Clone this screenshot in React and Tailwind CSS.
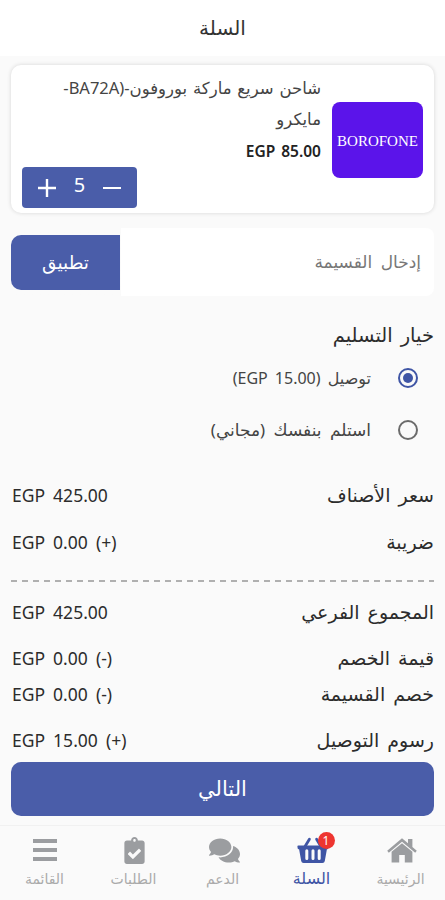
import React, { useState } from 'react';
import { FaComments, FaClipboardCheck } from 'react-icons/fa';

const ITEM_PRICE = 85;
const DELIVERY_FEE = 15;

const egp = (value) => `EGP ${value.toFixed(2)}`;

const HomeIcon = () => (
    <svg viewBox="0 0 30 25" className="mr-[-3px] h-[25px] w-[30px]" fill="currentColor">
        <path d="M15 0.2 L21 5.2 V1 h4.4 v8 L29.8 12.8 28.2 14.8 15 3.8 1.8 14.8 0.2 12.8z" />
        <path d="M15 5.2 L25.4 13.8 V24.6 H17.8 V17 H12.2 V24.6 H4.6 V13.8z" />
    </svg>
);

const BasketIcon = () => (
    <svg viewBox="0 0 32 28" className="mr-[-2px] h-7 w-8" fill="none" stroke="currentColor">
        <path d="M8 10.5 L12.4 3.2 M24 10.5 L19.6 3.2" strokeWidth="2.8" strokeLinecap="round" />
        <path
            d="M1.4 9.5 H30.6 a1 1 0 0 1 1 1.1 l-0.3 1.8 a1 1 0 0 1 -1 0.8 h-0.4 L27.8 25 a2.4 2.4 0 0 1 -2.4 2 H6.6 a2.4 2.4 0 0 1 -2.4 -2 L2.1 13.2 H1.7 a1 1 0 0 1 -1 -0.8 L0.4 10.6 a1 1 0 0 1 1 -1.1z"
            fill="currentColor"
            stroke="none"
        />
        <path d="M9.8 14.8 v7.6 M16 14.8 v7.6 M22.2 14.8 v7.6" stroke="#fafafa" strokeWidth="3" strokeLinecap="round" />
    </svg>
);

const MenuIcon = () => (
    <svg viewBox="0 0 24 22" className="h-[22px] w-6" stroke="currentColor" strokeWidth="4">
        <path d="M0 2h24M0 11h24M0 20h24" />
    </svg>
);

const Radio = ({ checked }) => (
    <span
        className={`flex size-[20px] items-center justify-center rounded-full border-2 ${
            checked ? 'border-[#3f55a5]' : 'border-[#6b6b6b]'
        }`}
    >
        {checked && <span className="size-[10px] rounded-full bg-[#3f55a5]" />}
    </span>
);

const Row = ({ label, value, className = '' }) => (
    <div className={`flex items-center justify-between text-[#2c2c2c] ${className}`}>
        <span className="text-[19px] whitespace-nowrap [word-spacing:3px]">{label}</span>
        <span dir="ltr" className="pl-px text-[17.5px] whitespace-nowrap [word-spacing:3.5px]">
            {value}
        </span>
    </div>
);

const navItems = [
    { label: 'الرئيسية', icon: <HomeIcon /> },
    { label: 'السلة', icon: <BasketIcon />, active: true },
    { label: 'الدعم', icon: <FaComments className="mr-[-4px] size-[31px]" /> },
    { label: 'الطلبات', icon: <FaClipboardCheck className="mr-[-1px] size-[27px]" /> },
    { label: 'القائمة', icon: <MenuIcon /> },
];

const App = () => {
    const [quantity, setQuantity] = useState(5);
    const [delivery, setDelivery] = useState(true);
    const subtotal = ITEM_PRICE * quantity;

    return (
        <div
            dir="rtl"
            className="flex h-[900px] w-[445px] flex-col overflow-hidden bg-[#fafafa] font-['Noto_Sans','DejaVu_Sans',sans-serif]"
        >
            <header className="flex h-14 shrink-0 items-center justify-center bg-white">
                <h1 className="text-[20px] text-[#333]">السلة</h1>
            </header>

            <main className="flex flex-col px-[11px] pt-[9px]">
                <section className="flex h-[148px] rounded-[10px] bg-white px-[11px] shadow-[0_0_4px_rgba(0,0,0,0.15)]">
                    <div className="mt-[37px] flex h-[76px] w-[91px] shrink-0 items-center justify-center rounded-lg bg-[#5b14ea]">
                        <span className="pt-0.5 font-['Liberation_Serif',serif] text-[15px] text-white">BOROFONE</span>
                    </div>
                    <div className="flex flex-1 flex-col pt-[7px]">
                        <p className="pr-[11px] text-[16.5px] leading-[31px] whitespace-nowrap text-[#444] [word-spacing:1.5px]">
                            شاحن سريع ماركة بوروفون-(BA72A-
                            <br />
                            مايكرو
                        </p>
                        <p className="pr-[11px] text-[15.5px] leading-[34px] font-semibold text-[#222] [word-spacing:2px]">
                            <span dir="ltr">{egp(ITEM_PRICE)}</span>
                        </p>
                        <div className="-mt-px flex h-[41px] w-[115px] items-center justify-between self-end rounded-[4px] bg-[#4a5da9] px-4 text-white">
                            <button aria-label="minus" className="flex w-[18px]" onClick={() => setQuantity(quantity - 1)}>
                                <span className="h-0.5 w-full bg-white" />
                            </button>
                            <span className="-mt-1.5 text-[20px]">{quantity}</span>
                            <button aria-label="plus" onClick={() => setQuantity(quantity + 1)}>
                                <svg viewBox="0 0 18 18" className="size-[18px]" stroke="currentColor" strokeWidth="2.4">
                                    <path d="M9 0v18M0 9h18" />
                                </svg>
                            </button>
                        </div>
                    </div>
                </section>

                <section className="mt-[15px] flex h-[68px] items-center rounded-lg bg-linear-to-l from-white from-74% to-[#fafafa] to-74%">
                    <div className="flex-1 pr-[13px] text-[17px] text-[#777] [word-spacing:4px]">إدخال القسيمة</div>
                    <button className="h-[55px] w-[109px] rounded-l-[10px] bg-[#4a5da9] text-[18.5px] text-white">تطبيق</button>
                </section>

                <section className="mt-[19px] flex flex-col">
                    <h2 className="flex h-10 items-center text-[19.5px] text-[#2c2c2c] [word-spacing:3px]">خيار التسليم</h2>
                    <button
                        className="flex h-[46px] items-center gap-[27px] pr-4 text-[16px] text-[#444] [word-spacing:3px]"
                        onClick={() => setDelivery(true)}
                    >
                        <Radio checked={delivery} />
                        <span>
                            توصيل <span dir="ltr">(EGP 15.00)</span>
                        </span>
                    </button>
                    <button
                        className="mt-1.5 flex h-[46px] items-center gap-[27px] pr-4 text-[17px] text-[#444] [word-spacing:4px]"
                        onClick={() => setDelivery(false)}
                    >
                        <Radio checked={!delivery} />
                        <span>استلم بنفسك (مجاني)</span>
                    </button>
                </section>

                <section className="mt-[19px] flex flex-col">
                    <Row className="h-[47px]" label="سعر الأصناف" value={egp(subtotal)} />
                    <Row className="h-[47px]" label="ضريبة" value={`${egp(0)} (+)`} />
                    <svg className="mt-[14px] h-0.5 w-full text-[#b0b0b0]">
                        <path d="M0 1H423" stroke="currentColor" strokeWidth="2" strokeDasharray="6 5" />
                    </svg>
                    <Row className="mt-[7px] h-[47px]" label="المجموع الفرعي" value={egp(subtotal)} />
                    <Row className="-mt-px h-[47px]" label="قيمة الخصم" value={`${egp(0)} (-)`} />
                    <Row className="-mt-1.5 h-[36px]" label="خصم القسيمة" value={`${egp(0)} (-)`} />
                    <Row className="mt-[5px] h-[47px]" label="رسوم التوصيل" value={`${egp(DELIVERY_FEE)} (+)`} />
                </section>

                <button className="-mt-0.5 h-[54px] rounded-[10px] bg-[#4a5da9] text-[21px] text-white">التالي</button>
            </main>

            <nav className="mt-auto grid h-[75px] shrink-0 grid-cols-5 border-t border-[#f1f1f1]">
                {navItems.map((item) => (
                    <div
                        key={item.label}
                        className={`flex flex-col items-center pt-2 ${item.active ? 'text-[#3f55a5]' : 'text-[#9b9da0]'}`}
                    >
                        <div className="relative flex h-8 items-center">
                            {item.icon}
                            {item.active && (
                                <span className="absolute -top-0.5 -right-2 flex size-[17px] items-center justify-center rounded-full bg-[#ee3530] text-[12px] text-white">
                                    1
                                </span>
                            )}
                        </div>
                        <span className={item.active ? 'text-[16px]' : 'pt-0.5 text-[14px] text-[#aaa]'}>{item.label}</span>
                    </div>
                ))}
            </nav>
        </div>
    );
};

export default App;
